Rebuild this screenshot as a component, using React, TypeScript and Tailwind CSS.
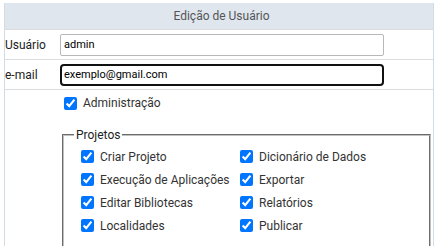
import React from "react";

const left = ["Criar Projeto", "Execução de Aplicações", "Editar Bibliotecas", "Localidades"];
const right = ["Dicionário de Dados", "Exportar", "Relatórios", "Publicar"];

function Check({ label }: { label: string }) {
  return (
    <label className="flex h-[23px] items-center gap-[6px] whitespace-nowrap">
      <input
        type="checkbox"
        defaultChecked
        className="m-0 h-[13px] w-[13px] shrink-0 accent-[#0075ff]"
      />
      <span>{label}</span>
    </label>
  );
}

export default function App() {
  return (
    <div className="min-h-[246px] bg-white font-['Roboto',sans-serif] text-[12px] text-[#222]">
      <div className="ml-[4px] mt-[3px] min-h-[260px] w-[430px] border-x border-[#d3dbe4]">
        <div className="flex h-[27px] items-center justify-center border-b border-[#dcdcdc] bg-[#dfe6ee] pb-[1px] pl-[5px] text-[#555]">
          Edição de Usuário
        </div>
        <div className="flex h-[30px] items-center border-b border-[#dcdcdc]">
          <div className="w-[55px]">Usuário</div>
          <input
            defaultValue="admin"
            className="h-[22px] w-[324px] rounded-[2px] border border-[#b8b8b8] bg-white px-[3px] text-[11px] text-black outline-none"
          />
        </div>
        <div className="flex h-[30px] items-center border-b border-[#dcdcdc]">
          <div className="w-[55px]">e-mail</div>
          <input
            defaultValue="exemplo@gmail.com"
            className="h-[22px] w-[324px] rounded-[4px] border-2 border-[#111] bg-white px-[2px] text-[11px] text-black outline-none"
          />
        </div>
        <div className="flex h-[26px] items-center gap-[6px] pl-[59px] text-[#333]">
          <input
            type="checkbox"
            defaultChecked
            className="m-0 h-[13px] w-[13px] accent-[#0075ff]"
          />
          <span>Administração</span>
        </div>
        <fieldset className="ml-[57px] mt-[10px] w-[369px] border-2 border-[#c0c0c0] px-[17px] pb-[14px] pt-[1px] text-[#333] [border-style:groove]">
          <legend className="ml-[-7px] px-[2px] text-[#222]">Projetos</legend>
          <div className="grid grid-cols-[159px_auto]">
            {left.map((l, i) => (
              <React.Fragment key={l}>
                <Check label={l} />
                <Check label={right[i]} />
              </React.Fragment>
            ))}
          </div>
        </fieldset>
      </div>
    </div>
  );
}
